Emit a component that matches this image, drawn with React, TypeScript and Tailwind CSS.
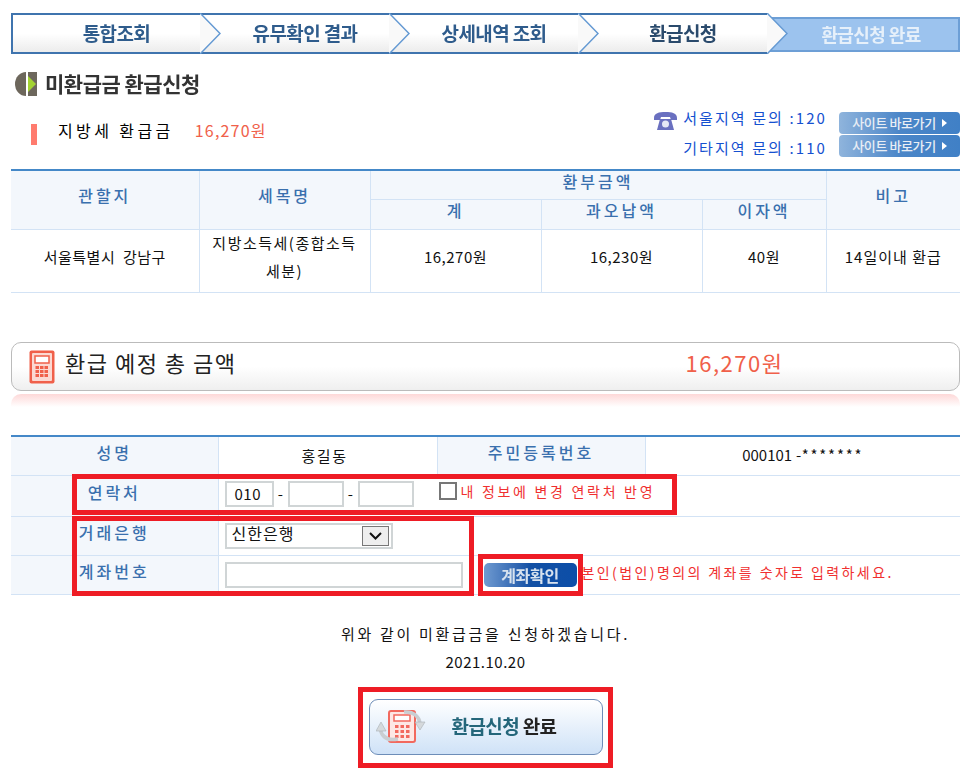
import React from 'react';

const FONT = "font-['Noto_Sans_CJK_KR','Noto_Sans',sans-serif]";

const steps = ['유무확인 결과', '상세내역 조회', '환급신청'];

const Chevron: React.FC = () => (
  <svg width="21" height="41" viewBox="0 0 21 41" className="shrink-0">
    <path d="M0 0 L20 20.5 L0 41 Z" fill="#f9f9f9" />
    <path d="M0 0 L20 20.5 L0 41" fill="none" stroke="#659ad3" strokeWidth="1.5" />
  </svg>
);

const Calculator: React.FC<{ className?: string }> = ({ className }) => (
  <svg viewBox="0 0 26 34" className={className}>
    <rect x="0.5" y="0.5" width="25" height="33" rx="2" fill="#f0604a" />
    <rect x="3" y="3" width="20" height="28" rx="1" fill="#fbd9d2" />
    <rect x="6" y="6" width="14" height="7" fill="#fff" stroke="#f0604a" strokeWidth="1.5" />
    {[16, 20, 24].map((y) =>
      [6.5, 11, 15.5].map((x) => <rect key={`${x}-${y}`} x={x} y={y} width="3.5" height="3" fill="#f0604a" />)
    )}
  </svg>
);

const SiteButton: React.FC = () => (
  <div className="flex h-[22px] w-[121px] items-center justify-center gap-[6px] rounded-[4px] bg-gradient-to-r from-[#8fb4dc] via-[#4b86c8] to-[#4080c6] text-[13px] font-medium tracking-[-0.4px] text-[#e9eef5]">
    <span>사이트 바로가기</span>
    <span className="h-0 w-0 border-y-[4px] border-l-[5px] border-y-transparent border-l-white" />
  </div>
);

const th = 'border border-[#d3e3f5] bg-[#f3f7fc] text-[16px] leading-[20px] font-medium tracking-[3px] text-[#3a70ae] text-center p-0';
const td = 'border border-[#d3e3f5] text-[15px] leading-[20px] tracking-[0.5px] text-[#111] text-center p-0';
const inputBox = 'h-[26px] border-2 border-[#d0d5d6] bg-white';

export default function App() {
  return (
    <div className={`relative h-[780px] w-[972px] overflow-hidden bg-white pl-[11px] pr-[12px] pt-[13px] ${FONT}`}>
      {/* step bar */}
      <div className="flex h-[41px] w-[949px]">
        <div className="flex h-[41px] w-[756px] items-center border-y-2 border-y-[#3f74ae] border-l-2 border-l-[#3f74ae] bg-gradient-to-b from-white via-white to-[#ececec]">
          <div className="flex w-[187px] shrink-0 justify-center pl-[20px] text-[19px] font-bold tracking-[-0.6px] text-[#2f5c8c] blur-[0.4px]">
            통합조회
          </div>
          {steps.map((s, i) => (
            <React.Fragment key={s}>
              <Chevron />
              <div className={`flex w-[168px] shrink-0 justify-center text-[19px] font-bold tracking-[-0.6px] blur-[0.4px] ${i === 2 ? 'text-[#2a4a6c]' : 'text-[#2f5c8c]'}`}>
                {s}
              </div>
            </React.Fragment>
          ))}
        </div>
        <div className="relative mt-[4px] flex h-[35px] flex-1 items-center justify-center border-2 border-[#6d9fd6] border-l-0 bg-[#9cc3ee] pl-[17px]">
          <span className="text-[18px] font-bold tracking-[-0.6px] text-[#e6f0fa] blur-[0.3px]">환급신청 완료</span>
          <svg width="21" height="41" viewBox="0 0 21 41" className="absolute left-0 top-[-6px]">
            <path d="M0 0 L20 20.5 L0 41 Z" fill="#f9f9f9" />
            <path d="M0 0 L20 20.5 L0 41" fill="none" stroke="#659ad3" strokeWidth="1.5" />
          </svg>
        </div>
      </div>

      {/* title */}
      <div className="mt-[16px] flex h-[27px] items-center pl-[4px]">
        <svg width="22" height="24" viewBox="0 0 22 24">
          <path d="M11 0 A11 12 0 0 0 11 24 Z" fill="#6d675c" />
          <path d="M13 0 H22 V24 H13 Z" fill="#6d675c" />
          <path d="M13 4 L21 12 L13 20 Z" fill="#a3d332" />
        </svg>
        <h1 className="ml-[8px] text-[21px] font-bold tracking-[-0.5px] text-[#333] blur-[0.4px]">미환급금 환급신청</h1>
      </div>

      {/* summary */}
      <div className="mt-[15px] flex h-[47px] items-start justify-between">
        <div className="mt-[12px] flex items-start">
          <span className="ml-[20px] h-[21px] w-[6px] bg-[#ff7b6e]" />
          <span className="ml-[21px] mt-[-6px] text-[16px] tracking-[3.4px] text-black">지방세 환급금</span>
          <span className="ml-[21px] mt-[-6px] text-[16px] tracking-[1.2px] text-[#f0604a]">16,270원</span>
        </div>
        <div className="flex">
          <div className="mt-[-7px] flex flex-col gap-[8px] text-[15px] leading-[20px] tracking-[2.1px] text-[#1450d0]">
            <div className="flex items-center gap-[6px]">
              <svg width="23" height="18" viewBox="0 0 23 18" className="mt-[7px]">
                <path d="M0 6 C0 1 5 0 11.5 0 C18 0 23 1 23 6 L23 8 L17 8 L16 5 L7 5 L6 8 L0 8 Z" fill="#6a70c0" />
                <path d="M6 7 H17 L20 18 H3 Z" fill="#6a70c0" />
                <circle cx="11.5" cy="12" r="3.5" fill="#e6e8f6" />
              </svg>
              <span>서울지역 문의 :120</span>
            </div>
            <div className="pl-[29px]">기타지역 문의 :110</div>
          </div>
          <div className="ml-[12px] flex flex-col gap-[1px]">
            <SiteButton />
            <SiteButton />
          </div>
        </div>
      </div>

      {/* refund table */}
      <table className="mt-[10px] w-[949px] table-fixed border-collapse border-t-2 border-t-[#4488c8]">
        <colgroup>
          <col className="w-[188px]" />
          <col className="w-[171px]" />
          <col className="w-[171px]" />
          <col className="w-[161px]" />
          <col className="w-[124px]" />
          <col className="w-[134px]" />
        </colgroup>
        <tbody>
          <tr className="h-[28px]">
            <th rowSpan={2} className={`${th} border-l-0 border-t-0 pb-[10px]`}>관할지</th>
            <th rowSpan={2} className={`${th} border-t-0 pb-[10px]`}>세목명</th>
            <th colSpan={3} className={`${th} border-t-0 pb-[8px]`}>환부금액</th>
            <th rowSpan={2} className={`${th} border-r-0 border-t-0 pb-[10px]`}>비고</th>
          </tr>
          <tr className="h-[30px]">
            <th className={`${th} pb-[9px]`}>계</th>
            <th className={`${th} pb-[9px]`}>과오납액</th>
            <th className={`${th} pb-[9px]`}>이자액</th>
          </tr>
          <tr className="h-[63px]">
            <td className={`${td} border-l-0 pb-[9px]`}>서울특별시&nbsp;&nbsp;강남구</td>
            <td className={`${td} pb-[6px] leading-[28px] tracking-[1.5px]`}>
              <div className="-mt-[3px]">
                지방소득세(종합소득
                <br />
                세분)
              </div>
            </td>
            <td className={`${td} pb-[9px]`}>16,270원</td>
            <td className={`${td} pb-[9px]`}>16,230원</td>
            <td className={`${td} pb-[9px]`}>40원</td>
            <td className={`${td} border-r-0 pb-[9px] tracking-[1px]`}>14일이내 환급</td>
          </tr>
        </tbody>
      </table>

      {/* total */}
      <div className="mt-[49px] flex h-[49px] w-[949px] items-center rounded-[10px] border border-[#bbbbbb] bg-gradient-to-b from-white via-white to-[#efefef]">
        <Calculator className="ml-[17px] h-[34px] w-[26px]" />
        <span className="mb-[8px] ml-[10px] text-[22px] tracking-[1.5px] text-[#222]">환급 예정 총 금액</span>
        <span className="mb-[8px] ml-[449px] text-[22px] tracking-[1.5px] text-[#f0604a]">16,270원</span>
      </div>
      <div className="mt-[3px] h-[13px] w-[949px] rounded-t-[10px] bg-gradient-to-b from-[#fdd8d8] to-white" />

      {/* applicant form */}
      <table className="mt-[28px] w-[949px] table-fixed border-collapse border-t-2 border-t-[#4488c8]">
        <colgroup>
          <col className="w-[207px]" />
          <col className="w-[219px]" />
          <col className="w-[208px]" />
          <col className="w-[315px]" />
        </colgroup>
        <tbody>
          <tr className="h-[39px]">
            <th className={`${th} border-l-0 border-t-0 pb-[8px]`}>성명</th>
            <td className={`${td} border-t-0 pr-[6px] tracking-[1.5px]`}>홍길동</td>
            <th className={`${th} border-t-0 pb-[8px]`}>주민등록번호</th>
            <td className={`${td} border-r-0 border-t-0 pb-[2px]`}>
              <span className="tracking-[0px]">000101</span> -<span className="tracking-[1.8px]">*******</span>
            </td>
          </tr>
          <tr className="h-[41px]">
            <th className={`${th} border-l-0 pb-[8px]`}>연락처</th>
            <td colSpan={3} className={`${td} border-r-0 text-left`}>
              <div className="flex items-center pb-[3px] pl-[6px]">
                <div className={`${inputBox} w-[49px] pl-[8px] leading-[22px]`}>010</div>
                <span className="w-[14px] text-center">-</span>
                <div className={`${inputBox} w-[56px]`} />
                <span className="w-[14px] text-center">-</span>
                <div className={`${inputBox} w-[56px]`} />
                <div className="mb-[6px] ml-[25px] h-[18px] w-[18px] border-2 border-[#777] bg-white" />
                <span className="mb-[6px] ml-[4px] text-[14px] tracking-[2.7px] text-[#f03030]">내 정보에 변경 연락처 반영</span>
              </div>
            </td>
          </tr>
          <tr className="h-[39px]">
            <th className={`${th} border-l-0 pb-[8px]`}>거래은행</th>
            <td colSpan={3} className={`${td} border-r-0 text-left`}>
              <div className="pl-[6px]">
                <div className={`${inputBox} flex w-[168px] items-center justify-between pl-[5px] pr-[2px]`}>
                  <span className="mb-[5px] text-[16px] tracking-[1px]">신한은행</span>
                  <span className="flex h-[20px] w-[27px] items-center justify-center border border-[#777] bg-[#eeeeee]">
                    <svg width="13" height="8" viewBox="0 0 13 8">
                      <path d="M1 1 L6.5 6.5 L12 1" fill="none" stroke="#111" strokeWidth="2" />
                    </svg>
                  </span>
                </div>
              </div>
            </td>
          </tr>
          <tr className="h-[39px]">
            <th className={`${th} border-l-0 pb-[8px]`}>계좌번호</th>
            <td colSpan={3} className={`${td} border-r-0 text-left`}>
              <div className="flex items-center pl-[6px]">
                <div className={`${inputBox} w-[238px]`} />
                <div className="ml-[21px] flex h-[24px] w-[93px] items-center justify-center rounded-[5px] bg-gradient-to-r from-[#6f9ad0] via-[#1250a4] to-[#0c4ea8] text-[16px] font-bold tracking-[-0.3px] text-[#d7e2ef] blur-[0.3px]">
                  계좌확인
                </div>
                <span className="mb-[6px] ml-[5px] text-[14px] tracking-[2.4px] text-[#f03030]">본인(법인)명의의 계좌를 숫자로 입력하세요.</span>
              </div>
            </td>
          </tr>
        </tbody>
      </table>

      {/* confirm */}
      <p className="mt-[27px] text-center text-[15px] leading-[24px] tracking-[2.7px] text-[#111]">위와 같이 미환급금을 신청하겠습니다.</p>
      <p className="mt-[4px] text-center text-[15px] leading-[24px] tracking-[0.5px] text-[#111]">2021.10.20</p>

      <div className="mt-[25px] flex justify-center">
        <div className="flex h-[56px] w-[234px] items-center rounded-[9px] border border-[#6d8db8] bg-gradient-to-b from-white to-[#cfe2f7]">
          <svg width="50" height="36" viewBox="0 0 50 36" className="ml-[6px] blur-[0.4px]">
            <rect x="13" y="2" width="26" height="31" rx="2" fill="#fde7e4" stroke="#f2695e" strokeWidth="2" />
            <rect x="18" y="6" width="16" height="6" fill="#fff" stroke="#f2695e" strokeWidth="1.5" />
            {[16, 21, 26].map((y) =>
              [19, 24.5, 30].map((x) => <rect key={`${x}-${y}`} x={x} y={y} width="3.5" height="3" fill="#f2695e" />)
            )}
            <path d="M4 20 C6 28 12 32 22 30" fill="none" stroke="#c9ced2" strokeWidth="3.5" />
            <path d="M0 22 L5 13 L10 22 Z" fill="#d5d9dc" stroke="#a9b0b6" strokeWidth="0.6" />
            <path d="M28 3 C38 2 43 8 44 14" fill="none" stroke="#c9ced2" strokeWidth="3.5" />
            <path d="M39 13 L49 13 L44 21 Z" fill="#d5d9dc" stroke="#a9b0b6" strokeWidth="0.6" />
          </svg>
          <span className="ml-[26px] text-[19px] font-bold tracking-[-0.6px] text-[#24667a] blur-[0.4px]">
            환급신청 <span className="text-[#222]">완료</span>
          </span>
        </div>
      </div>

      {/* red annotation boxes */}
      <div className="absolute left-[72px] top-[474px] h-[41px] w-[605px] border-[5px] border-[#ee1c25]" />
      <div className="absolute left-[72px] top-[516px] h-[80px] w-[402px] border-[5px] border-[#ee1c25]" />
      <div className="absolute left-[478px] top-[554px] h-[42px] w-[105px] border-[5px] border-[#ee1c25]" />
      <div className="absolute left-[358px] top-[687px] h-[81px] w-[255px] border-[5px] border-[#ee1c25]" />
    </div>
  );
}
